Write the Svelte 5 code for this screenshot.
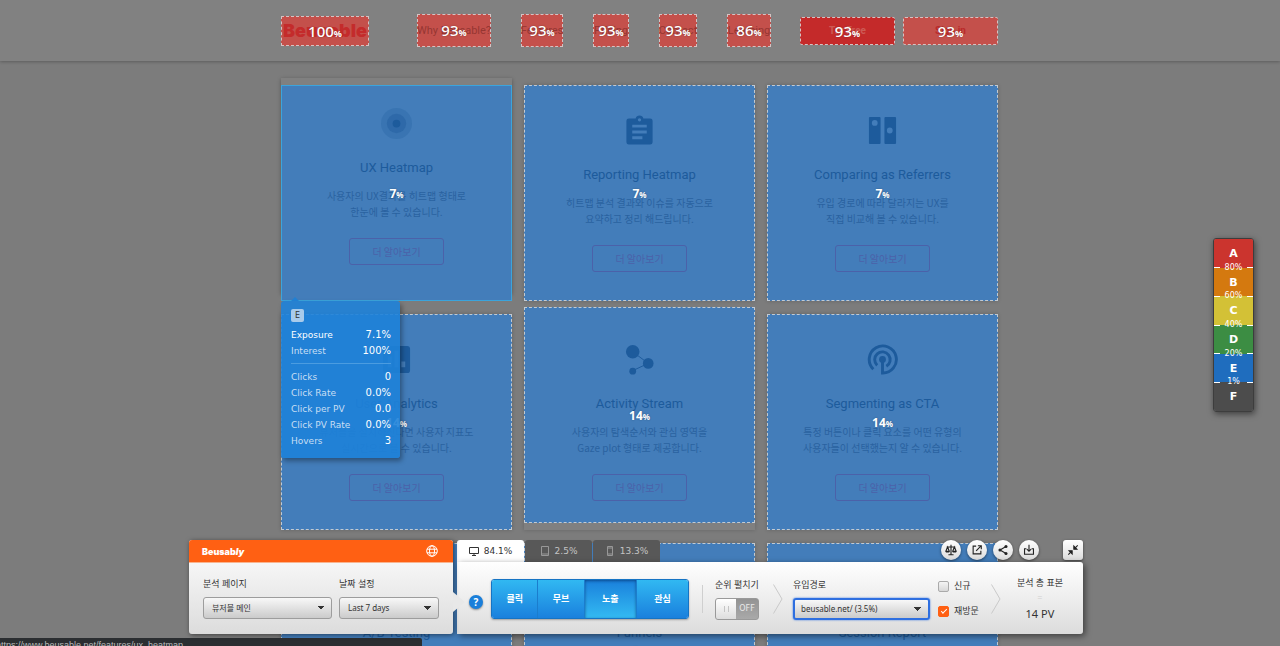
<script lang="ts">
  interface NavItem {
    label: string;
    score: number;
    width: number;
  }

  interface Card {
    title: string;
    lines: string[];
    icon: string;
    score: number;
    hovered?: boolean;
    shifted?: boolean;
  }

  const nav: NavItem[] = [
    { label: 'Why Beusable?', score: 93, width: 74 },
    { label: 'Features', score: 93, width: 42 },
    { label: 'Pricing', score: 93, width: 36 },
    { label: 'Contact', score: 93, width: 38 },
    { label: 'Learning', score: 86, width: 44 }
  ];

  const cards: Card[] = [
    { title: 'UX Heatmap', lines: ['사용자의 UX결과를 히트맵 형태로', '한눈에 볼 수 있습니다.'], icon: 'heatmap', score: 7, hovered: true },
    { title: 'Reporting Heatmap', lines: ['히트맵 분석 결과와 이슈를 자동으로', '요약하고 정리 해드립니다.'], icon: 'report', score: 7 },
    { title: 'Comparing as Referrers', lines: ['유입 경로에 따라 달라지는 UX를', '직접 비교해 볼 수 있습니다.'], icon: 'compare', score: 7 },
    { title: 'User Analytics', lines: ['뷰저블을 설치하신다면 사용자 지표도', '실시간으로 볼 수 있습니다.'], icon: 'chart', score: 14 },
    { title: 'Activity Stream', lines: ['사용자의 탐색순서와 관심 영역을', 'Gaze plot 형태로 제공합니다.'], icon: 'stream', score: 14, shifted: true },
    { title: 'Segmenting as CTA', lines: ['특정 버튼이나 클릭 요소를 어떤 유형의', '사용자들이 선택했는지 알 수 있습니다.'], icon: 'segment', score: 14 },
    { title: 'A/B Testing', lines: [], icon: '', score: 0 },
    { title: 'Funnels', lines: [], icon: '', score: 0 },
    { title: 'Session Report', lines: [], icon: '', score: 0 }
  ];

  const exposure = [
    ['Exposure', '7.1%'],
    ['Interest', '100%']
  ];
  const clicks = [
    ['Clicks', '0'],
    ['Click Rate', '0.0%'],
    ['Click per PV', '0.0'],
    ['Click PV Rate', '0.0%'],
    ['Hovers', '3']
  ];

  const grades = [
    { name: 'A', color: '#cb342e', limit: '80%' },
    { name: 'B', color: '#d4790f', limit: '60%' },
    { name: 'C', color: '#d3c136', limit: '40%' },
    { name: 'D', color: '#3c8d43', limit: '20%' },
    { name: 'E', color: '#1f6dbe', limit: '1%' },
    { name: 'F', color: '#4c4c4c', limit: '' }
  ];

  const devices = [
    { id: 'desktop', rate: '84.1%' },
    { id: 'tablet', rate: '2.5%' },
    { id: 'mobile', rate: '13.3%' }
  ];
  const modes = ['클릭', '무브', '노출', '관심'];

  let device = $state('desktop');
  let mode = $state('노출');
  let ranking = $state(false);
  let newVisit = $state(false);
  let revisit = $state(true);
</script>

{#snippet score(value: number)}
  <span class="score">{value}<small>%</small></span>
{/snippet}

{#snippet rows(items: string[][])}
  <dl>
    {#each items as [name, value]}
      <div class:strong={name === 'Exposure'}><dt>{name}</dt><dd>{value}</dd></div>
    {/each}
  </dl>
{/snippet}

{#snippet chevron()}
  <svg class="chevron" width="10" height="30" viewBox="0 0 10 30" fill="none" stroke="#c9c9c9"><path d="M.5 .5 9 15 .5 29.5" /></svg>
{/snippet}

<div class="page">
  <header>
    <div class="bar">
      <a class="zone-link logo" href="#home">Beusable{@render score(100)}</a>
      <nav>
        {#each nav as item}
          <a class="zone-link" href="#{item.label}" style:width="{item.width}px">{item.label}{@render score(item.score)}</a>
        {/each}
      </nav>
      <div class="account">
        <a class="zone-link solid" href="#try">Try Free{@render score(93)}</a>
        <a class="zone-link" href="#signin">Sign in{@render score(93)}</a>
      </div>
    </div>
  </header>

  <main>
    {#each cards as card}
      <article class:hovered={card.hovered} class:shifted={card.shifted}>
        <div class="zone"></div>
        <div class="content">
          <svg class="icon" viewBox="0 0 32 32" fill="currentColor">
            {#if card.icon === 'heatmap'}
              <circle cx="16" cy="16" r="16" opacity=".25" />
              <circle cx="16" cy="16" r="10" opacity=".4" />
              <circle cx="16" cy="16" r="4" />
            {:else if card.icon === 'report'}
              <path fill-rule="evenodd" d="M5 3.500h7a4.200 4.200 0 0 1 8 0h7a2.500 2.500 0 0 1 2.500 2.500v22a2.500 2.500 0 0 1-2.500 2.500H5A2.500 2.500 0 0 1 2.500 28V6A2.500 2.500 0 0 1 5 3.500ZM16 3.300a1.700 1.700 0 1 0 0 3.400 1.700 1.700 0 0 0 0-3.400ZM8.500 10v3h15v-3Zm0 6v3h15v-3Zm0 6v3H19v-3Z" />
            {:else if card.icon === 'compare'}
              <path fill-rule="evenodd" d="M3 2h10a1 1 0 0 1 1 1v26a1 1 0 0 1-1 1H3a1 1 0 0 1-1-1V3a1 1 0 0 1 1-1Zm5 3.200a3 3 0 1 0 0 6 3 3 0 0 0 0-6ZM19 2h10a1 1 0 0 1 1 1v26a1 1 0 0 1-1 1H19a1 1 0 0 1-1-1V3a1 1 0 0 1 1-1Zm4.500 11a3 3 0 1 0 0 6 3 3 0 0 0 0-6Z" />
            {:else if card.icon === 'chart'}
              <path fill-rule="evenodd" d="M5 2h22a3 3 0 0 1 3 3v22a3 3 0 0 1-3 3H5a3 3 0 0 1-3-3V5a3 3 0 0 1 3-3Zm2 11v11h4V13Zm7-6v17h4V7Zm7 11v6h4v-6Z" />
            {:else if card.icon === 'stream'}
              <path d="M9 8 25 20 8 28" fill="none" stroke="currentColor" />
              <circle cx="9" cy="8" r="7" /><circle cx="25" cy="20" r="5.500" /><circle cx="9" cy="28" r="3.500" />
            {:else if card.icon === 'segment'}
              <g fill="none" stroke="currentColor" stroke-width="3">
                <path d="M6.500 26A14 14 0 1 1 16 30V17" />
                <path d="M10.500 22A8 8 0 1 1 20 23" />
              </g>
              <circle cx="16" cy="16" r="3.500" />
            {/if}
          </svg>
          <h2>{card.title}</h2>
          <p>{#each card.lines as line}<span>{line}</span>{/each}</p>
          <button type="button" class="more">더 알아보기</button>
        </div>
        {@render score(card.score)}
        {#if card.hovered}
          <aside class="tooltip">
            <span class="grade">E</span>
            {@render rows(exposure)}
            <hr />
            {@render rows(clicks)}
          </aside>
        {/if}
      </article>
    {/each}
  </main>

  <ol class="legend">
    {#each grades as grade}
      <li style:background={grade.color}>
        <b>{grade.name}</b>
        {#if grade.limit}<span>{grade.limit}</span>{/if}
      </li>
    {/each}
  </ol>

  <div class="status">https://www.beusable.net/features/ux_heatmap</div>

  <div class="dock">
    <section class="source">
      <div class="brand">
        <strong>Beusab<i>ly</i></strong>
        <button type="button" aria-label="Language">
          <svg width="12" height="12" viewBox="0 0 12 12" fill="none" stroke="#fff">
            <circle cx="6" cy="6" r="5.300" /><ellipse cx="6" cy="6" rx="2.500" ry="5.300" /><path d="M1 4.200h10M1 7.800h10" />
          </svg>
        </button>
      </div>
      <div class="fields">
        <div class="field page-field">
          <label for="page">분석 페이지</label>
          <select id="page"><option>뷰저블 메인</option></select>
        </div>
        <div class="field">
          <label for="period">날짜 설정</label>
          <select id="period"><option>Last 7 days</option></select>
        </div>
      </div>
    </section>

    <section class="control">
      <div class="top">
        <div class="tabs" role="tablist">
          {#each devices as item}
            <button type="button" role="tab" aria-selected={device === item.id} onclick={() => (device = item.id)}>
              <svg width="10" height="10" viewBox="0 0 10 10" fill="none" stroke="currentColor">
                {#if item.id === 'desktop'}
                  <path d="M.500 1.500h9v6h-9zM3 9.500h4M5 7.500v2" />
                {:else if item.id === 'tablet'}
                  <path d="M1.500 .500h7v9h-7zM1.500 8h7" />
                {:else}
                  <path d="M2.500 .500h5v9h-5zM2.500 2h5M2.500 8h5" />
                {/if}
              </svg>
              {item.rate}
            </button>
          {/each}
        </div>
        <div class="tools">
          <button type="button" aria-label="Compare">
            <svg viewBox="0 0 14 14"><path d="M7 1v11M4 12.500h6M2 3.500h10M3 3.500 1 8.500h4ZM11 3.500 9 8.500h4ZM1 9.300h4M9 9.300h4" /></svg>
          </button>
          <button type="button" aria-label="Open in new window">
            <svg viewBox="0 0 14 14"><path d="M6 2.500H2.500v9h9V8M8 2h4v4M12 2 6 8" /></svg>
          </button>
          <button type="button" aria-label="Share">
            <svg viewBox="0 0 14 14"><path d="M10.500 3 3.500 7l7 4" /><g fill="#222" stroke="none"><circle cx="10.500" cy="3" r="1.800" /><circle cx="3.500" cy="7" r="1.800" /><circle cx="10.500" cy="11" r="1.800" /></g></svg>
          </button>
          <button type="button" aria-label="Download">
            <svg viewBox="0 0 14 14"><path d="M4 5.500H1.800v6.500h10.400V5.500H10M7 1v7M4.500 6 7 8.500 9.500 6" /></svg>
          </button>
          <button type="button" class="collapse" aria-label="Collapse">
            <svg viewBox="0 0 14 14"><path d="M12.500 1.500 9 5M1.500 12.500 5 9" /><path d="M8 2.500V6h3.500ZM2.500 8H6v3.500Z" fill="#222" /></svg>
          </button>
        </div>
      </div>

      <div class="panel">
        <button type="button" class="help" aria-label="Help">?</button>
        <div class="modes">
          {#each modes as item}
            <button type="button" aria-pressed={mode === item} onclick={() => (mode = item)}>{item}</button>
          {/each}
        </div>
        <span class="divider"></span>
        <div class="field">
          <label for="ranking">순위 펼치기</label>
          <span class="switch">
            <input id="ranking" type="checkbox" role="switch" bind:checked={ranking} />
            <span class="knob"></span><span class="state">{ranking ? 'ON' : 'OFF'}</span>
          </span>
        </div>
        {@render chevron()}
        <div class="field referrer">
          <label for="referrer">유입경로</label>
          <select id="referrer"><option>beusable.net/ (3.5%)</option></select>
        </div>
        <div class="visits">
          <label><input type="checkbox" bind:checked={newVisit} />신규</label>
          <label><input type="checkbox" bind:checked={revisit} />재방문</label>
        </div>
        {@render chevron()}
        <div class="sample">
          <span>분석 총 표본</span>
          <span class="equals">=</span>
          <output>14 PV</output>
        </div>
      </div>
    </section>
  </div>
</div>

<style>
  :global(body) {
    margin: 0;
    background: #7c7c7c;
  }
  .page {
    position: relative;
    height: 100vh;
    overflow: hidden;
    font-family: Roboto, 'Noto Sans CJK KR', sans-serif;
  }
  button, select, input { font: inherit; margin: 0; }
  button { cursor: pointer; }

  header {
    background: #818181;
    box-shadow: 0 1px 3px rgba(0, 0, 0, 0.25);
  }
  .bar {
    display: flex;
    align-items: center;
    box-sizing: border-box;
    max-width: 718px;
    height: 61px;
    margin: 0 auto;
  }
  .zone-link {
    position: relative;
    box-sizing: border-box;
    display: flex;
    align-items: center;
    justify-content: center;
    height: 33px;
    border: 1px dashed #d5c3c3;
    background: #c4504b;
    color: #963632;
    font-size: 11px;
    white-space: nowrap;
    text-decoration: none;
  }
  .logo {
    width: 88px;
    height: 30px;
    color: #c42b2b;
    font: 900 18px Inter, sans-serif;
  }
  nav {
    display: flex;
    gap: 30px;
    margin-left: 48px;
  }
  .account {
    display: flex;
    gap: 8px;
    margin-left: auto;
    padding-right: 1px;
  }
  .account .zone-link {
    width: 95px;
    height: 28px;
    border-radius: 2px;
    color: #bb2a2a;
    font-size: 10px;
    font-weight: 700;
  }
  .account .solid {
    background: #c42a2a;
    color: #cd5a55;
  }
  .score {
    position: absolute;
    inset: 0;
    display: flex;
    align-items: baseline;
    justify-content: center;
    color: #fff;
    font: 500 15px/31px 'Noto Sans', sans-serif;
    text-shadow: 0 0 2px rgba(0, 0, 0, 0.3);
  }
  .logo .score { line-height: 28px; }
  .account .score { line-height: 26px; }
  .score small { font-size: 9px; font-weight: 700; }

  main {
    display: grid;
    grid-template-columns: repeat(3, minmax(0, 231px));
    grid-auto-rows: 216px;
    gap: 13px 12px;
    max-width: 718px;
    margin: 24px auto 0;
  }
  article {
    position: relative;
    background: #808080;
    box-shadow: 0 0 4px rgba(0, 0, 0, 0.2);
  }
  .zone {
    position: absolute;
    inset: 0;
    border: 1px dashed #c2cad2;
    background: #437dba;
  }
  .shifted .zone, .shifted .score { transform: translateY(-7px); }
  .content {
    position: relative;
    display: flex;
    flex-direction: column;
    align-items: center;
    padding-top: 30px;
    color: #1d5b9c;
  }
  .hovered { box-shadow: 0 -7px 0 #808080, 0 -6px 4px rgba(0, 0, 0, 0.3); z-index: 1; }
  .hovered .zone { border: 1px solid #3ba4dc; }
  .hovered .content { transform: translateY(-7px); }
  .icon { width: 31px; height: 31px; }
  h2 {
    margin: 18px 0 0;
    font-size: 13px;
    font-weight: 400;
    line-height: 22px;
  }
  p {
    display: flex;
    flex-direction: column;
    align-items: center;
    min-height: 32px;
    margin: 9px 0 0;
    color: #2a62a0;
    font: 10px/16px 'Noto Sans CJK KR', sans-serif;
    white-space: nowrap;
  }
  .more {
    width: 95px;
    height: 27px;
    margin-top: 18px;
    padding: 0;
    border: 1px solid #4b61a9;
    border-radius: 3px;
    background: none;
    color: #4b61a9;
    font: 10px 'Noto Sans CJK KR', sans-serif;
  }
  article .score { font-size: 12px; font-weight: 700; line-height: 218px; }
  article .score small { font-size: 8px; }

  .tooltip {
    position: absolute;
    top: 100%;
    left: 0;
    z-index: 2;
    box-sizing: border-box;
    width: 119px;
    padding: 8px 9px 9px 10px;
    border-radius: 3px;
    background: rgba(30, 130, 217, 0.9);
    box-shadow: 2px 3px 5px rgba(0, 0, 0, 0.35);
    color: #c8dff4;
    font: 9px/16px 'DejaVu Sans', sans-serif;
  }
  .tooltip::before {
    content: '';
    position: absolute;
    bottom: 100%;
    left: 10px;
    border: 4px solid transparent;
    border-top: 0;
    border-bottom-color: #2180d3;
  }
  .grade {
    display: block;
    width: 13px;
    height: 13px;
    margin-bottom: 5px;
    border-radius: 2px;
    background: #a9cbeb;
    color: #333;
    font-size: 8px;
    line-height: 13px;
    text-align: center;
  }
  dl { margin: 0; }
  dl div { display: flex; justify-content: space-between; }
  dd { margin: 0; color: #fff; font-size: 10px; }
  .strong { color: #fff; }
  hr {
    margin: 4px 0 5px;
    border: 0;
    border-top: 1px solid #4b9ce0;
  }

  .legend {
    position: absolute;
    top: 238px;
    right: 26px;
    display: flex;
    flex-direction: column;
    box-sizing: border-box;
    width: 41px;
    height: 174px;
    margin: 0;
    padding: 0;
    border: 1px solid #3d3d3d;
    border-radius: 3px;
    box-shadow: 1px 2px 6px rgba(0, 0, 0, 0.5);
    color: #fff;
    font-family: 'DejaVu Sans', sans-serif;
    list-style: none;
  }
  .legend li {
    position: relative;
    flex: 1;
    min-height: 0;
    text-align: center;
  }
  .legend li:first-child { border-radius: 2px 2px 0 0; }
  .legend li:last-child { border-radius: 0 0 2px 2px; }
  .legend b { display: block; font-size: 11px; line-height: 28px; padding-top: 1px; margin-bottom: -1px; }
  .legend span {
    position: absolute;
    inset: auto 0 -5px;
    z-index: 1;
    display: flex;
    align-items: center;
    justify-content: space-between;
    font-size: 8px;
    line-height: 10px;
  }
  .legend span::before, .legend span::after {
    content: '';
    width: 6px;
    height: 1px;
    background: #fff;
  }

  .status {
    position: absolute;
    bottom: 0;
    left: 0;
    width: 33%;
    height: 8px;
    overflow: hidden;
    border-radius: 0 2px 0 0;
    background: #2b2e31;
    color: #b9babb;
    font: 9px/14px 'Liberation Sans', sans-serif;
    text-indent: -4px;
  }

  .dock {
    position: absolute;
    right: 8px;
    bottom: 12px;
    left: 0;
    display: flex;
    gap: 4px;
    max-width: 894px;
    margin: 0 auto;
    color: #333;
    font: 9px/14px 'Noto Sans', 'Noto Sans CJK KR', sans-serif;
    white-space: nowrap;
  }
  .source {
    position: relative;
    z-index: 1;
    flex: 0 0 264px;
    border-radius: 3px;
    background: linear-gradient(#f6f6f6 25%, #dcdcdc);
    box-shadow: 1px 1px 5px rgba(0, 0, 0, 0.5);
  }
  .source::after {
    content: '';
    position: absolute;
    top: 52px;
    left: 100%;
    border: 10px solid transparent;
    border-right: 0;
    border-left: 12px solid #e8e8e8;
  }
  .brand {
    display: flex;
    align-items: center;
    justify-content: space-between;
    height: 22px;
    padding: 0 15px 0 13px;
    border-bottom: 1px solid #f9b48f;
    border-radius: 3px 3px 0 0;
    background: #ff6013;
    color: #fff;
  }
  .brand strong { font: 900 9px Inter, sans-serif; }
  .brand button { display: flex; padding: 0; border: 0; background: none; }
  .fields { display: flex; gap: 7px; padding: 14px 14px 15px; }
  .field { display: flex; flex-direction: column; gap: 6px; }
  .field:last-child { flex: 1; }
  .page-field { width: 129px; }
  select {
    appearance: none;
    box-sizing: border-box;
    width: 100%;
    height: 22px;
    padding: 0 8px;
    border: 1px solid #9d9d9d;
    border-radius: 3px;
    background:
      linear-gradient(45deg, transparent 50%, #333 50%) right 10px center / 4px 4px no-repeat,
      linear-gradient(-45deg, transparent 50%, #333 50%) right 6px center / 4px 4px no-repeat,
      linear-gradient(#f8f8f8, #cbcbcb);
    background:
      linear-gradient(to bottom left, #333 50%, transparent 50%) right 10px center / 4px 4px no-repeat,
      linear-gradient(to bottom right, #333 50%, transparent 50%) right 6px center / 4px 4px no-repeat,
      linear-gradient(#f8f8f8, #cbcbcb);
    color: #333;
    font-size: 8px;
  }

  .control { flex: 1; display: flex; flex-direction: column; }
  .top { display: flex; justify-content: space-between; height: 22px; }
  .tabs { display: flex; gap: 1px; }
  .tabs button {
    display: flex;
    align-items: center;
    justify-content: center;
    gap: 5px;
    width: 67px;
    padding: 0;
    border: 0;
    border-radius: 3px 3px 0 0;
    background: #585858;
    color: #c4c4c4;
    font: 9px 'DejaVu Sans', sans-serif;
  }
  .tabs button[aria-selected='true'] { background: #fff; color: #333; }
  .tabs svg { opacity: 0.6; }
  .tabs [aria-selected='true'] svg { opacity: 1; }
  .tools { display: flex; gap: 6px; }
  .tools button {
    display: flex;
    align-items: center;
    justify-content: center;
    width: 20px;
    height: 20px;
    padding: 0;
    border: 0;
    border-radius: 50%;
    background: linear-gradient(#fff, #dcdcdc);
    box-shadow: 0 1px 3px rgba(0, 0, 0, 0.5);
  }
  .tools .collapse { margin-left: 18px; border-radius: 3px; }
  .tools svg { width: 12px; height: 12px; fill: none; stroke: #222; stroke-width: 1.3; }
  .panel {
    flex: 1;
    display: flex;
    align-items: center;
    padding: 1px 14px 0 12px;
    border-radius: 0 3px 3px 0;
    background: linear-gradient(#fff, #dcdcdc);
    box-shadow: 2px 2px 6px rgba(0, 0, 0, 0.5);
  }
  .help {
    width: 14px;
    height: 14px;
    margin: 6px 8px 0 0;
    padding: 0;
    border: 0;
    border-radius: 50%;
    background: #1a7fda;
    box-shadow: 0 1px 2px rgba(0, 0, 0, 0.4);
    color: #fff;
    font: 700 10px/14px 'Noto Sans', sans-serif;
  }
  .modes {
    flex: 0 0 198px;
    display: flex;
    box-sizing: border-box;
    height: 40px;
    overflow: hidden;
    border: 1px solid #1674c4;
    border-radius: 3px;
    box-shadow: 0 1px 2px rgba(0, 0, 0, 0.3);
  }
  .modes button {
    flex: 1;
    padding: 0;
    border: 0;
    border-right: 1px solid #1b7dcd;
    background: linear-gradient(#31b8f2, #1a80dd);
    color: #fff;
    font-weight: 700;
  }
  .modes button:nth-child(n + 3) { flex-grow: 1.13; }
  .modes button:last-child { border: 0; }
  .modes button[aria-pressed='true'] {
    background: linear-gradient(#1a80dc, #33baf2);
    box-shadow: inset 0 1px 3px rgba(0, 40, 90, 0.6);
  }
  .divider {
    width: 1px;
    height: 28px;
    margin: 0 12px 0 13px;
    background: #cfcfcf;
  }
  .switch {
    position: relative;
    display: flex;
    box-sizing: border-box;
    width: 44px;
    height: 22px;
    overflow: hidden;
    border: 1px solid #999;
    border-radius: 3px;
    background: linear-gradient(#939393, #a9a9a9);
    color: #e8e8e8;
    font: 8px/20px 'DejaVu Sans', sans-serif;
  }
  .switch input {
    position: absolute;
    inset: 0;
    width: 100%;
    height: 100%;
    opacity: 0;
    cursor: pointer;
  }
  .knob {
    display: flex;
    align-items: center;
    justify-content: center;
    width: 20px;
    background: linear-gradient(#fff, #ddd);
  }
  .knob::before {
    content: '';
    width: 3px;
    height: 6px;
    border: solid #c4c4c4;
    border-width: 0 1px;
  }
  .switch input:checked ~ .knob { order: 1; }
  .state { flex: 1; text-align: center; }
  .chevron { margin: 0 10px 0 14px; }
  .referrer { width: 137px; }
  .referrer select {
    padding: 0 6px;
    border: 2px solid #2e6fe0;
    box-shadow: 0 0 2px #2e6fe0;
  }
  .visits { display: flex; flex-direction: column; gap: 11px; margin-left: 8px; }
  .visits label { display: flex; align-items: center; gap: 5px; }
  .visits input {
    appearance: none;
    display: flex;
    align-items: center;
    justify-content: center;
    box-sizing: border-box;
    width: 11px;
    height: 11px;
    border: 1px solid #aaa;
    border-radius: 2px;
    background: linear-gradient(#f4f4f4, #d8d8d8);
  }
  .visits input:checked { border-color: #ff6013; background: #ff6013; }
  .visits input:checked::before {
    content: '';
    width: 5px;
    height: 2px;
    border: solid #fff;
    border-width: 0 0 1px 1px;
    transform: translateY(-1px) rotate(-45deg);
  }
  .visits + :global(.chevron) { margin-left: 12px; }
  .sample {
    display: flex;
    flex: 1;
    flex-direction: column;
    align-items: center;
  }
  .equals { color: #d0d0d0; line-height: 16px; }
  output { font-size: 11px; line-height: 15px; }
</style>
